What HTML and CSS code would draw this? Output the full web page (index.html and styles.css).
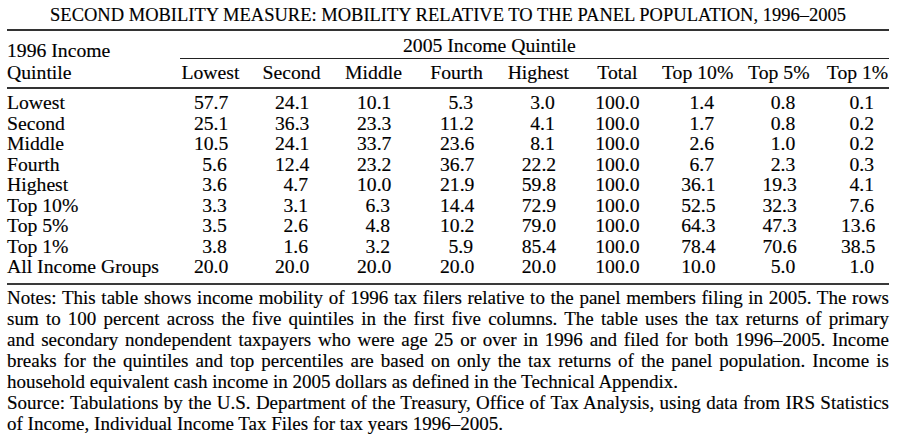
FILE: index.html
```html
<!DOCTYPE html>
<html lang="en">
<head>
<meta charset="utf-8">
<title>Second Mobility Measure</title>
<link rel="stylesheet" href="styles.css">
</head>
<body>
<div class="page">
  <h1 class="title">SECOND MOBILITY MEASURE: MOBILITY RELATIVE TO THE PANEL POPULATION, 1996–2005</h1>
  <div class="table">
    <div class="thead">
      <div class="stub">1996 Income<br>Quintile</div>
      <div class="span">2005 Income Quintile</div>
      <div class="h">Lowest</div>
      <div class="h">Second</div>
      <div class="h">Middle</div>
      <div class="h">Fourth</div>
      <div class="h">Highest</div>
      <div class="h">Total</div>
      <div class="h">Top 10%</div>
      <div class="h">Top 5%</div>
      <div class="h last">Top 1%</div>
    </div>
    <div class="tbody">
      <div class="lbl">Lowest</div><div class="n">57.7</div><div class="n">24.1</div><div class="n">10.1</div><div class="n">5.3</div><div class="n">3.0</div><div class="n tot">100.0</div><div class="n">1.4</div><div class="n">0.8</div><div class="n last">0.1</div>
      <div class="lbl">Second</div><div class="n">25.1</div><div class="n">36.3</div><div class="n">23.3</div><div class="n">11.2</div><div class="n">4.1</div><div class="n tot">100.0</div><div class="n">1.7</div><div class="n">0.8</div><div class="n last">0.2</div>
      <div class="lbl">Middle</div><div class="n">10.5</div><div class="n">24.1</div><div class="n">33.7</div><div class="n">23.6</div><div class="n">8.1</div><div class="n tot">100.0</div><div class="n">2.6</div><div class="n">1.0</div><div class="n last">0.2</div>
      <div class="lbl">Fourth</div><div class="n">5.6</div><div class="n">12.4</div><div class="n">23.2</div><div class="n">36.7</div><div class="n">22.2</div><div class="n tot">100.0</div><div class="n">6.7</div><div class="n">2.3</div><div class="n last">0.3</div>
      <div class="lbl">Highest</div><div class="n">3.6</div><div class="n">4.7</div><div class="n">10.0</div><div class="n">21.9</div><div class="n">59.8</div><div class="n tot">100.0</div><div class="n">36.1</div><div class="n">19.3</div><div class="n last">4.1</div>
      <div class="lbl">Top 10%</div><div class="n">3.3</div><div class="n">3.1</div><div class="n">6.3</div><div class="n">14.4</div><div class="n">72.9</div><div class="n tot">100.0</div><div class="n">52.5</div><div class="n">32.3</div><div class="n last">7.6</div>
      <div class="lbl">Top 5%</div><div class="n">3.5</div><div class="n">2.6</div><div class="n">4.8</div><div class="n">10.2</div><div class="n">79.0</div><div class="n tot">100.0</div><div class="n">64.3</div><div class="n">47.3</div><div class="n last">13.6</div>
      <div class="lbl">Top 1%</div><div class="n">3.8</div><div class="n">1.6</div><div class="n">3.2</div><div class="n">5.9</div><div class="n">85.4</div><div class="n tot">100.0</div><div class="n">78.4</div><div class="n">70.6</div><div class="n last">38.5</div>
      <div class="lbl">All Income Groups</div><div class="n">20.0</div><div class="n">20.0</div><div class="n">20.0</div><div class="n">20.0</div><div class="n">20.0</div><div class="n tot">100.0</div><div class="n">10.0</div><div class="n">5.0</div><div class="n last">1.0</div>
    </div>
  </div>
  <div class="notes">
    <div class="line just">Notes: This table shows income mobility of 1996 tax filers relative to the panel members filing in 2005. The rows</div>
    <div class="line just">sum to 100 percent across the five quintiles in the first five columns. The table uses the tax returns of primary</div>
    <div class="line just">and secondary nondependent taxpayers who were age 25 or over in 1996 and filed for both 1996–2005. Income</div>
    <div class="line just">breaks for the quintiles and top percentiles are based on only the tax returns of the panel population. Income is</div>
    <div class="line">household equivalent cash income in 2005 dollars as defined in the Technical Appendix.</div>
    <div class="line just">Source: Tabulations by the U.S. Department of the Treasury, Office of Tax Analysis, using data from IRS Statistics</div>
    <div class="line">of Income, Individual Income Tax Files for tax years 1996–2005.</div>
  </div>
</div>
</body>
</html>
```
FILE: styles.css
```css
html, body {
  margin: 0;
  padding: 0;
  background: #ffffff;
}

body {
  font-family: "Liberation Serif", "Times New Roman", serif;
  font-size: 19.7px;
  color: #000;
  -webkit-text-stroke: 0.15px #000;
}

.page {
  width: 882px;
  padding-left: 7px;
}

.title {
  margin: 0 0 2px;
  padding-top: 3px;
  font-size: 18.5px;
  font-weight: normal;
  line-height: 24px;
  text-align: center;
  white-space: nowrap;
}

.table {
  border-top: 2px solid #333;
  border-bottom: 2px solid #3a3a3a;
}

.thead,
.tbody {
  display: grid;
  grid-template-columns: 163px 80.75px 81.5px 82.5px 83.5px 80px 78.25px 82.25px 80.25px 70px;
}

.thead {
  grid-template-rows: auto auto;
  border-bottom: 2px solid #333;
}

.stub {
  grid-row: 1 / span 2;
  grid-column: 1;
  padding-top: 8px;
  line-height: 22px;
}

.span {
  grid-row: 1;
  grid-column: 2 / span 9;
  margin-left: 10px;
  padding: 4px 0 2px 223px;
  line-height: 21px;
  border-bottom: 1px solid #222;
}

.h {
  grid-row: 2;
  justify-self: center;
  padding: 3px 0 4px;
  line-height: 21px;
  white-space: nowrap;
}

.h.last,
.n.last {
  padding-left: 7px;
}

.tbody {
  padding: 3px 0 6px;
  grid-auto-rows: 20.5px;
  line-height: 20.5px;
}

.lbl {
  grid-column: 1;
  white-space: nowrap;
}

.n {
  justify-self: center;
  width: 33px;
  text-align: right;
  white-space: nowrap;
}

.n.tot {
  width: auto;
}

.n.last {
  width: 33px;
}

.notes {
  padding-top: 2px;
  font-size: 19px;
  line-height: 21px;
}

.line {
  white-space: nowrap;
}

.line.just {
  text-align: justify;
  text-align-last: justify;
}
```
